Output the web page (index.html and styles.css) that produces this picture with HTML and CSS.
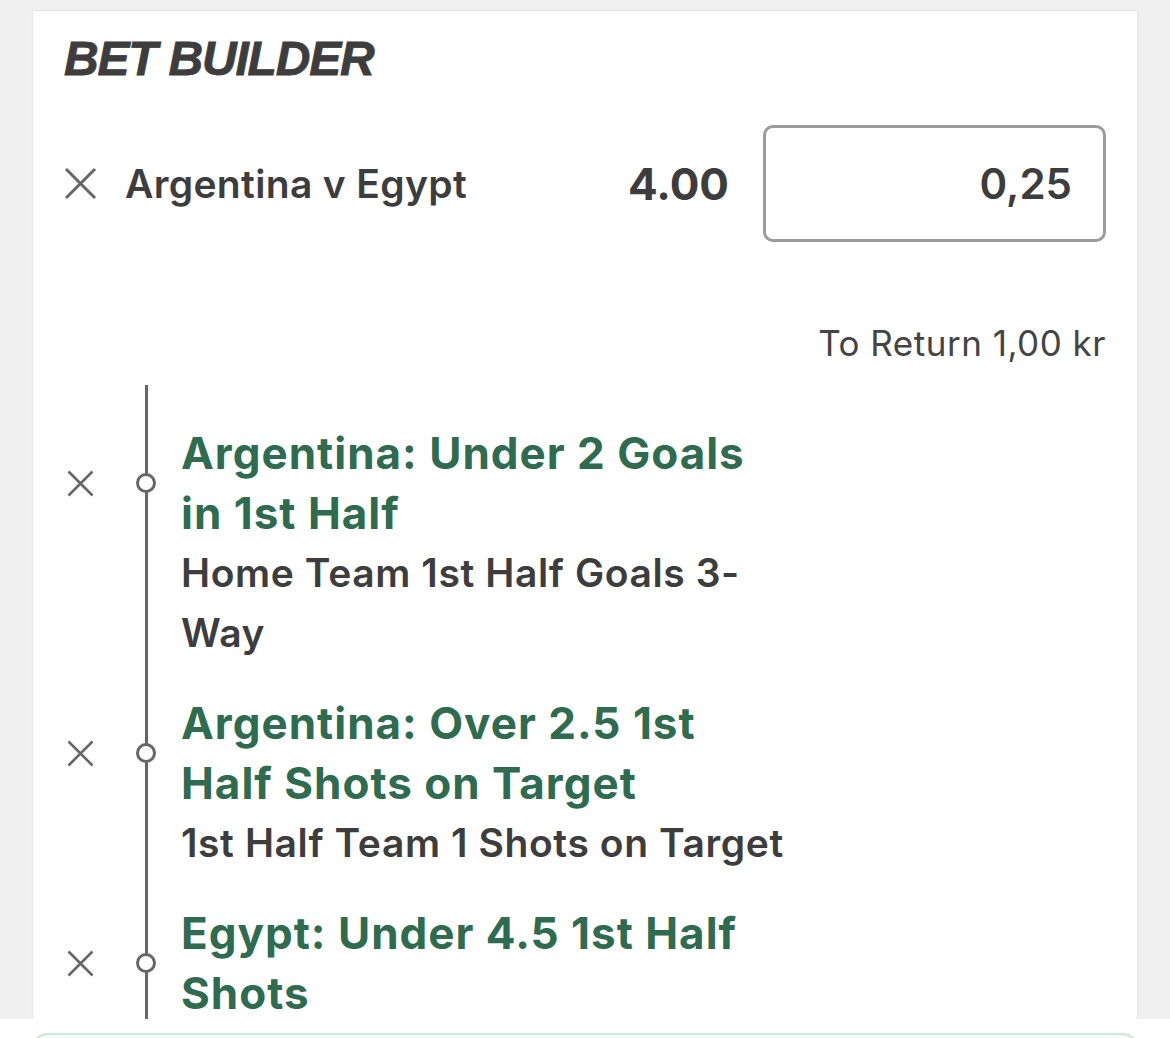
FILE: index.html
```html
<!DOCTYPE html>
<html lang="en">
<head>
  <meta charset="UTF-8">
  <meta name="viewport" content="width=device-width, initial-scale=1.0">
  <title>Bet Builder</title>
  <link rel="stylesheet" href="styles.css">
</head>
<body>
  <div class="slip">
    <section class="bet-builder">
      <h2 class="bb-title">BET BUILDER</h2>

      <div class="bb-row">
        <button class="remove remove-lg" aria-label="Remove">
          <svg viewBox="0 0 33 33" width="33" height="33"><path d="M2 2L31 31M31 2L2 31" stroke="#666" stroke-width="3" fill="none"/></svg>
        </button>
        <div class="fixture">Argentina v Egypt</div>
        <div class="odds">4.00</div>
        <input type="text" class="stake" value="0,25">
      </div>

      <div class="to-return">To Return 1,00 kr</div>

      <div class="legs">
        <div class="leg">
          <div class="leg-head">
            <button class="remove" aria-label="Remove">
              <svg viewBox="0 0 27 27" width="27" height="27"><path d="M1.5 1.5L25.5 25.5M25.5 1.5L1.5 25.5" stroke="#666" stroke-width="2.6" fill="none"/></svg>
            </button>
            <span class="node"></span>
            <div class="leg-title">Argentina: Under 2 Goals in 1st Half</div>
          </div>
          <div class="leg-market">Home Team 1st Half Goals 3-Way</div>
        </div>

        <div class="leg">
          <div class="leg-head">
            <button class="remove" aria-label="Remove">
              <svg viewBox="0 0 27 27" width="27" height="27"><path d="M1.5 1.5L25.5 25.5M25.5 1.5L1.5 25.5" stroke="#666" stroke-width="2.6" fill="none"/></svg>
            </button>
            <span class="node"></span>
            <div class="leg-title">Argentina: Over 2.5 1st Half Shots on Target</div>
          </div>
          <div class="leg-market">1st Half Team 1 Shots on Target</div>
        </div>

        <div class="leg">
          <div class="leg-head">
            <button class="remove" aria-label="Remove">
              <svg viewBox="0 0 27 27" width="27" height="27"><path d="M1.5 1.5L25.5 25.5M25.5 1.5L1.5 25.5" stroke="#666" stroke-width="2.6" fill="none"/></svg>
            </button>
            <span class="node"></span>
            <div class="leg-title">Egypt: Under 4.5 1st Half Shots</div>
          </div>
          <div class="leg-market">1st Half Team 2 Shots</div>
        </div>
      </div>
    </section>
  </div>

  <div class="footer">
    <div class="place-bet"></div>
  </div>
</body>
</html>
```

FILE: styles.css
```css
body {
  font-family: 'Inter', 'Noto Sans', sans-serif;
  margin: 0;
  padding: 0;
  background-color: white;
  color: #3d3d3d;
  height: 100vh;
  overflow: hidden;
}

.slip {
  height: 1008px;
  padding: 11px 33px 0 33px;
  background-color: #f0f0f0;
  overflow: hidden;
}

.bet-builder {
  background: white;
  padding: 20px 31px 200px 31px;
  box-shadow: 0 0 2px rgba(0, 0, 0, 0.12);
}

.bb-title {
  font-family: 'Liberation Sans', Arial, sans-serif;
  font-style: italic;
  font-weight: bold;
  font-size: 48px;
  line-height: 56px;
  letter-spacing: -1.2px;
  -webkit-text-stroke: 0.8px #3d3d3d;
  color: #3d3d3d;
  margin: 0;
}

.bb-row {
  display: flex;
  align-items: center;
  margin-top: 38px;
}

.remove {
  background: none;
  border: none;
  padding: 0;
  width: 33px;
  display: flex;
  align-items: center;
  justify-content: center;
  cursor: pointer;
  flex-shrink: 0;
}

.fixture {
  flex-grow: 1;
  margin-left: 28px;
  font-size: 39px;
  letter-spacing: 0.35px;
  font-weight: 600;
}

.odds {
  font-size: 44px;
  font-weight: 700;
  margin-right: 34px;
}

.stake {
  width: 343px;
  height: 117px;
  box-sizing: border-box;
  border: 3px solid #9b9b9b;
  border-radius: 10px;
  padding: 0 31px;
  text-align: right;
  font-family: 'Inter', 'Noto Sans', sans-serif;
  font-size: 42px;
  font-weight: 600;
  color: #3d3d3d;
  outline: none;
}

.to-return {
  text-align: right;
  font-size: 35px;
  letter-spacing: 0.5px;
  line-height: 40px;
  margin-top: 81px;
  color: #444;
}

.legs {
  position: relative;
  margin-top: 22px;
  padding-top: 38px;
  display: flex;
  flex-direction: column;
  gap: 30px;
}

.legs::before {
  content: '';
  position: absolute;
  left: 80.5px;
  top: 0;
  bottom: -200px;
  width: 3px;
  background-color: #666;
}

.leg-head {
  display: flex;
  align-items: center;
}

.node {
  position: relative;
  z-index: 1;
  width: 20px;
  height: 20px;
  box-sizing: border-box;
  border: 3px solid #666;
  border-radius: 50%;
  background: white;
  margin-left: 39px;
  flex-shrink: 0;
}

.leg-title {
  margin-left: 25px;
  max-width: 607px;
  font-size: 44px;
  letter-spacing: 1px;
  line-height: 60px;
  font-weight: 700;
  color: #2e6b4f;
}

.leg-market {
  padding-left: 117px;
  max-width: 607px;
  font-size: 39px;
  letter-spacing: 0.6px;
  line-height: 60px;
  font-weight: 600;
  color: #3d3d3d;
}

.footer {
  padding: 14px 30px 0 30px;
}

.place-bet {
  height: 60px;
  border: 2px solid #cfe7d3;
  border-radius: 18px;
  background-color: #f4faf5;
}
```
